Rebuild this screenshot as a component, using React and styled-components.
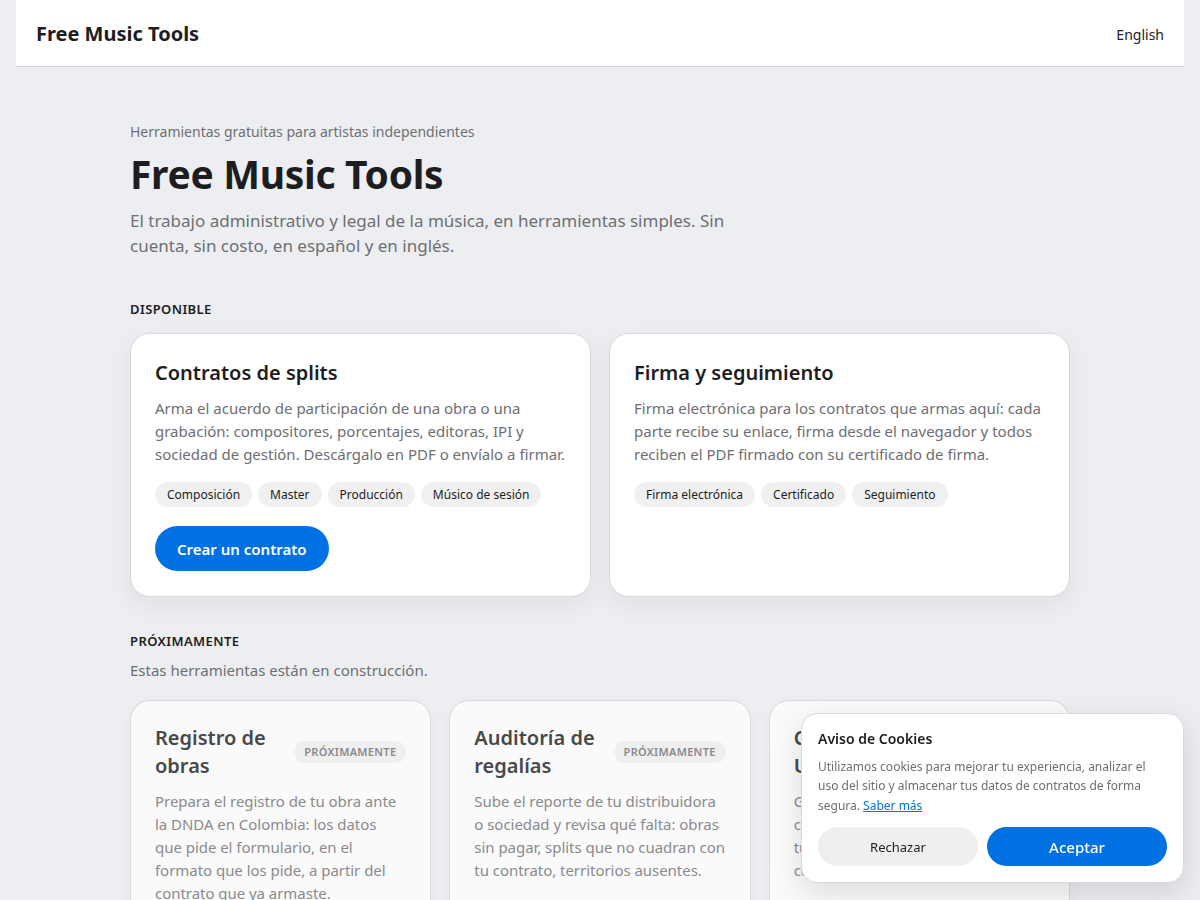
import React from "react";
import styled, { createGlobalStyle } from "styled-components";

const Global = createGlobalStyle`
  * { box-sizing: border-box; }
  html, body { margin: 0; padding: 0; }
  body {
    background: #edeef1;
    font-family: "Noto Sans", "Open Sans", sans-serif;
    color: #1d1d1f;
    -webkit-font-smoothing: antialiased;
  }
`;

const Header = styled.header`
  margin: 0 16px;
  height: 67px;
  background: #fff;
  border-bottom: 1px solid #d2d4d9;
  display: flex;
  align-items: center;
  justify-content: space-between;
  padding: 0 20px;
`;

const Brand = styled.div`
  font-size: 20px;
  font-weight: 700;
  color: #1d1d1f;
`;

const LangLink = styled.a`
  font-size: 14px;
  color: #222;
  text-decoration: none;
  margin-top: 2px;
`;

const Main = styled.main`
  max-width: 940px;
  margin: 0 auto;
  padding: 55px 0 60px;
`;

const Eyebrow = styled.p`
  margin: 0;
  font-size: 14px;
  line-height: 20px;
  color: #6e6e73;
`;

const Title = styled.h1`
  margin: 8px 0 0;
  font-size: 39px;
  line-height: 47px;
  font-weight: 700;
  color: #1d1d1f;
  letter-spacing: -0.3px;
`;

const Lead = styled.p`
  margin: 11px 0 0;
  max-width: 610px;
  font-size: 17px;
  line-height: 25px;
  color: #6e6e73;
`;

const SectionLabel = styled.h2`
  margin: ${(p) => p.$top}px 0 0;
  font-size: 13px;
  line-height: 18px;
  font-weight: 600;
  letter-spacing: 0.4px;
  text-transform: uppercase;
  color: #1d1d1f;
`;

const SectionNote = styled.p`
  margin: 9px 0 0;
  font-size: 15px;
  line-height: 22px;
  color: #6e6e73;
`;

const Grid = styled.div`
  display: grid;
  grid-template-columns: repeat(${(p) => p.$cols}, 1fr);
  gap: 18px;
  margin-top: ${(p) => p.$top}px;
`;

const Card = styled.article`
  background: ${(p) => (p.$muted ? "#fafafa" : "#fff")};
  border: 1px solid #d8d9dd;
  border-radius: 20px;
  padding: ${(p) => (p.$muted ? "23px 24px 25px" : "25px 24px")};
  box-shadow: ${(p) =>
    p.$muted ? "0 4px 14px rgba(0,0,0,0.03)" : "0 8px 24px rgba(0,0,0,0.06)"};
  display: flex;
  flex-direction: column;
  align-items: flex-start;
`;

const CardTitle = styled.h3`
  margin: 0;
  font-size: 20px;
  line-height: 28px;
  font-weight: 600;
  color: ${(p) => (p.$muted ? "#48484a" : "#1d1d1f")};
`;

const CardHead = styled.div`
  display: flex;
  align-items: center;
  justify-content: space-between;
  gap: 12px;
  width: 100%;
`;

const Badge = styled.span`
  flex: none;
  font-size: 11px;
  line-height: 22px;
  height: 22px;
  padding: 0 10px;
  border-radius: 999px;
  background: #efefef;
  color: #8a8a8e;
  font-weight: 600;
  letter-spacing: 0.3px;
  text-transform: uppercase;
`;

const CardText = styled.p`
  margin: 10px 0 0;
  font-size: 15px;
  line-height: 23px;
  color: ${(p) => (p.$muted ? "#8a8a8e" : "#6e6e73")};
  letter-spacing: ${(p) => (p.$muted ? "-0.04px" : "0")};
`;

const Tags = styled.div`
  display: flex;
  flex-wrap: wrap;
  gap: 6px;
  margin-top: 16px;
`;

const Tag = styled.span`
  font-size: 12px;
  line-height: 25px;
  height: 25px;
  padding: 0 12px;
  border-radius: 999px;
  background: #f0f0f0;
  color: #1d1d1f;
`;

const PrimaryButton = styled.button`
  margin-top: 19px;
  height: 45px;
  padding: 0 22px;
  border: none;
  border-radius: 999px;
  background: #0071e3;
  color: #fff;
  font-family: inherit;
  font-size: 15px;
  font-weight: 600;
  cursor: pointer;
`;

const Cookie = styled.aside`
  position: fixed;
  right: 16px;
  bottom: 17px;
  width: 383px;
  background: #fff;
  border: 1px solid #d8d9dd;
  border-radius: 16px;
  padding: 16px;
  box-shadow: 0 10px 30px rgba(0,0,0,0.12);
`;

const CookieTitle = styled.h4`
  margin: 0;
  font-size: 14px;
  line-height: 18px;
  font-weight: 600;
  color: #1d1d1f;
`;

const CookieText = styled.p`
  margin: 9px 0 0;
  font-size: 12px;
  line-height: 19.5px;
  color: #6e6e73;
`;

const CookieLink = styled.a`
  color: #0071e3;
  text-decoration: underline;
`;

const CookieActions = styled.div`
  display: grid;
  grid-template-columns: 160fr 180fr;
  gap: 9px;
  margin-top: 12px;
`;

const CookieButton = styled.button`
  height: 39px;
  border: none;
  border-radius: 999px;
  font-family: inherit;
  cursor: pointer;
  background: ${(p) => (p.$primary ? "#0071e3" : "#efefef")};
  color: ${(p) => (p.$primary ? "#fff" : "#1d1d1f")};
  font-size: ${(p) => (p.$primary ? "15px" : "13px")};
  font-weight: ${(p) => (p.$primary ? 500 : 400)};
`;

const available = [
  {
    title: "Contratos de splits",
    text: "Arma el acuerdo de participación de una obra o una grabación: compositores, porcentajes, editoras, IPI y sociedad de gestión. Descárgalo en PDF o envíalo a firmar.",
    tags: ["Composición", "Master", "Producción", "Músico de sesión"],
    action: "Crear un contrato",
  },
  {
    title: "Firma y seguimiento",
    text: "Firma electrónica para los contratos que armas aquí: cada parte recibe su enlace, firma desde el navegador y todos reciben el PDF firmado con su certificado de firma.",
    tags: ["Firma electrónica", "Certificado", "Seguimiento"],
  },
];

const upcoming = [
  {
    title: "Registro de obras",
    text: "Prepara el registro de tu obra ante la DNDA en Colombia: los datos que pide el formulario, en el formato que los pide, a partir del contrato que ya armaste.",
  },
  {
    title: "Auditoría de regalías",
    text: "Sube el reporte de tu distribuidora o sociedad y revisa qué falta: obras sin pagar, splits que no cuadran con tu contrato, territorios ausentes.",
  },
  {
    title: "Códigos Unificados",
    text: "Gestiona los identificadores de tu catálogo y prepárate para entregar tu música con los números correctos: ISRC, UPC e ISWC.",
  },
];

export default function App() {
  return (
    <>
      <Global />
      <Header>
        <Brand>Free Music Tools</Brand>
        <LangLink href="#">English</LangLink>
      </Header>
      <Main>
        <Eyebrow>Herramientas gratuitas para artistas independientes</Eyebrow>
        <Title>Free Music Tools</Title>
        <Lead>
          El trabajo administrativo y legal de la música, en herramientas
          simples. Sin cuenta, sin costo, en español y en inglés.
        </Lead>

        <SectionLabel $top={42}>Disponible</SectionLabel>
        <Grid $cols={2} $top={15}>
          {available.map((c) => (
            <Card key={c.title}>
              <CardTitle>{c.title}</CardTitle>
              <CardText>{c.text}</CardText>
              <Tags>
                {c.tags.map((t) => (
                  <Tag key={t}>{t}</Tag>
                ))}
              </Tags>
              {c.action && <PrimaryButton>{c.action}</PrimaryButton>}
            </Card>
          ))}
        </Grid>

        <SectionLabel $top={35}>Próximamente</SectionLabel>
        <SectionNote>Estas herramientas están en construcción.</SectionNote>
        <Grid $cols={3} $top={19}>
          {upcoming.map((c) => (
            <Card key={c.title} $muted>
              <CardHead>
                <CardTitle $muted>{c.title}</CardTitle>
                <Badge>Próximamente</Badge>
              </CardHead>
              <CardText $muted>{c.text}</CardText>
            </Card>
          ))}
        </Grid>
      </Main>

      <Cookie>
        <CookieTitle>Aviso de Cookies</CookieTitle>
        <CookieText>
          Utilizamos cookies para mejorar tu experiencia, analizar el uso del
          sitio y almacenar tus datos de contratos de forma segura.{" "}
          <CookieLink href="#">Saber más</CookieLink>
        </CookieText>
        <CookieActions>
          <CookieButton>Rechazar</CookieButton>
          <CookieButton $primary>Aceptar</CookieButton>
        </CookieActions>
      </Cookie>
    </>
  );
}
